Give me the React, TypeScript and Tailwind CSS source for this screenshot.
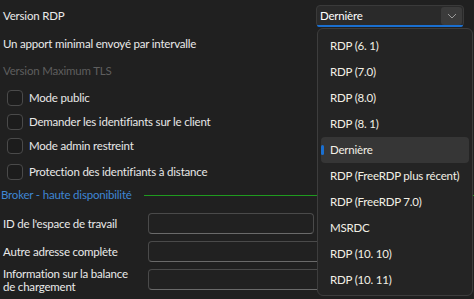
import React from "react";

const items = [
  "RDP (6. 1)",
  "RDP (7.0)",
  "RDP (8.0)",
  "RDP (8. 1)",
  "Dernière",
  "RDP (FreeRDP plus récent)",
  "RDP (FreeRDP 7.0)",
  "MSRDC",
  "RDP (10. 10)",
  "RDP (10. 11)",
];

function Check({ label }: { label: string }) {
  return (
    <div className="flex items-center h-[24px] pl-[7px]">
      <div className="w-[16px] h-[16px] rounded-[4px] border border-[#4a4a4a] bg-[#1c1c1c]" />
      <span className="ml-[6px] text-[#e8e8e8]">{label}</span>
    </div>
  );
}

export default function App() {
  return (
    <div
      className="relative w-[474px] h-[299px] overflow-hidden bg-[#202020] text-[11.5px] tracking-[-0.2px] leading-[16px] text-[#eaeaea] whitespace-nowrap"
      style={{ fontFamily: 'Lato, "Noto Sans", sans-serif' }}
    >
      <div className="flex flex-col pt-[5px]">
        <div className="flex items-center justify-between h-[22px] pl-[3px] pr-[10px]">
          <span>Version RDP</span>
          <div className="relative w-[148px] h-[22px] rounded-[4px] border border-[#3a3a3a] bg-[#2a2a2a] flex items-center">
            <span className="pl-[3px] text-white">Dernière</span>
            <div className="absolute right-[1px] top-[1px] w-[21px] h-[18px] rounded-[3px] bg-[#3b3b3b] flex items-center justify-center">
              <svg width="10" height="6" viewBox="0 0 10 6" fill="none">
                <path d="M1 1 L5 5 L9 1" stroke="#9a9a9a" strokeWidth="1" />
              </svg>
            </div>
            <div className="absolute left-0 right-0 bottom-[-1px] h-[2px] bg-[#1a6fd0] rounded-b-[2px]" />
          </div>
        </div>
        <div className="flex items-center h-[27px] pl-[3px] mt-[3px]">Un apport minimal envoyé par intervalle</div>
        <div className="flex items-center h-[27px] pl-[3px] text-[#5e5e5e]">Version Maximum TLS</div>
        <div className="mt-[2px]">
          <Check label="Mode public" />
          <Check label="Demander les identifiants sur le client" />
          <Check label="Mode admin restreint" />
          <div className="h-[2px]" />
          <Check label="Protection des identifiants à distance" />
        </div>
        <div className="flex items-center h-[22px] pl-[1px]">
          <span className="text-[#3f86d4]">Broker - haute disponibilité</span>
          <div className="ml-[12px] flex-1 h-[1px] bg-[#1f9a1f]" />
        </div>
        <div className="flex flex-col gap-[7px] mt-[7px] pl-[3px]">
          <div className="flex items-center h-[21px]">
            <span className="w-[145px]">ID de l'espace de travail</span>
            <div className="w-[166px] h-[21px] rounded-[4px] border border-[#4a4a4a] border-b-[#6a6a6a] bg-[#212121]" />
          </div>
          <div className="flex items-center h-[21px]">
            <span className="w-[145px]">Autre adresse complète</span>
            <div className="w-[200px] h-[21px] rounded-[4px] border border-[#4a4a4a] border-b-[#6a6a6a] bg-[#212121]" />
          </div>
          <div className="flex items-center h-[21px]">
            <div className="w-[145px] flex flex-col leading-[13px]">
              <span>Information sur la balance</span>
              <span>de chargement</span>
            </div>
            <div className="w-[200px] h-[21px] rounded-[4px] border border-[#4a4a4a] border-b-[#6a6a6a] bg-[#212121]" />
          </div>
        </div>
      </div>

      <div className="absolute left-[317px] top-[28px] w-[156px] h-[268px] rounded-[6px] border border-[#3d3d3d] bg-[#242424] px-[3px] pt-[4px] text-[#f3f0e6]">
        {items.map((it) => {
          const sel = it === "Dernière";
          return (
            <div
              key={it}
              className={
                sel
                  ? "relative flex items-center h-[26px] rounded-[4px] bg-[#363636] pl-[9px]"
                  : "relative flex items-center h-[26px] pl-[9px]"
              }
            >
              {sel && <div className="absolute left-0 top-[8px] w-[3px] h-[10px] rounded-[2px] bg-[#1a6fd0]" />}
              {it}
            </div>
          );
        })}
      </div>
    </div>
  );
}
